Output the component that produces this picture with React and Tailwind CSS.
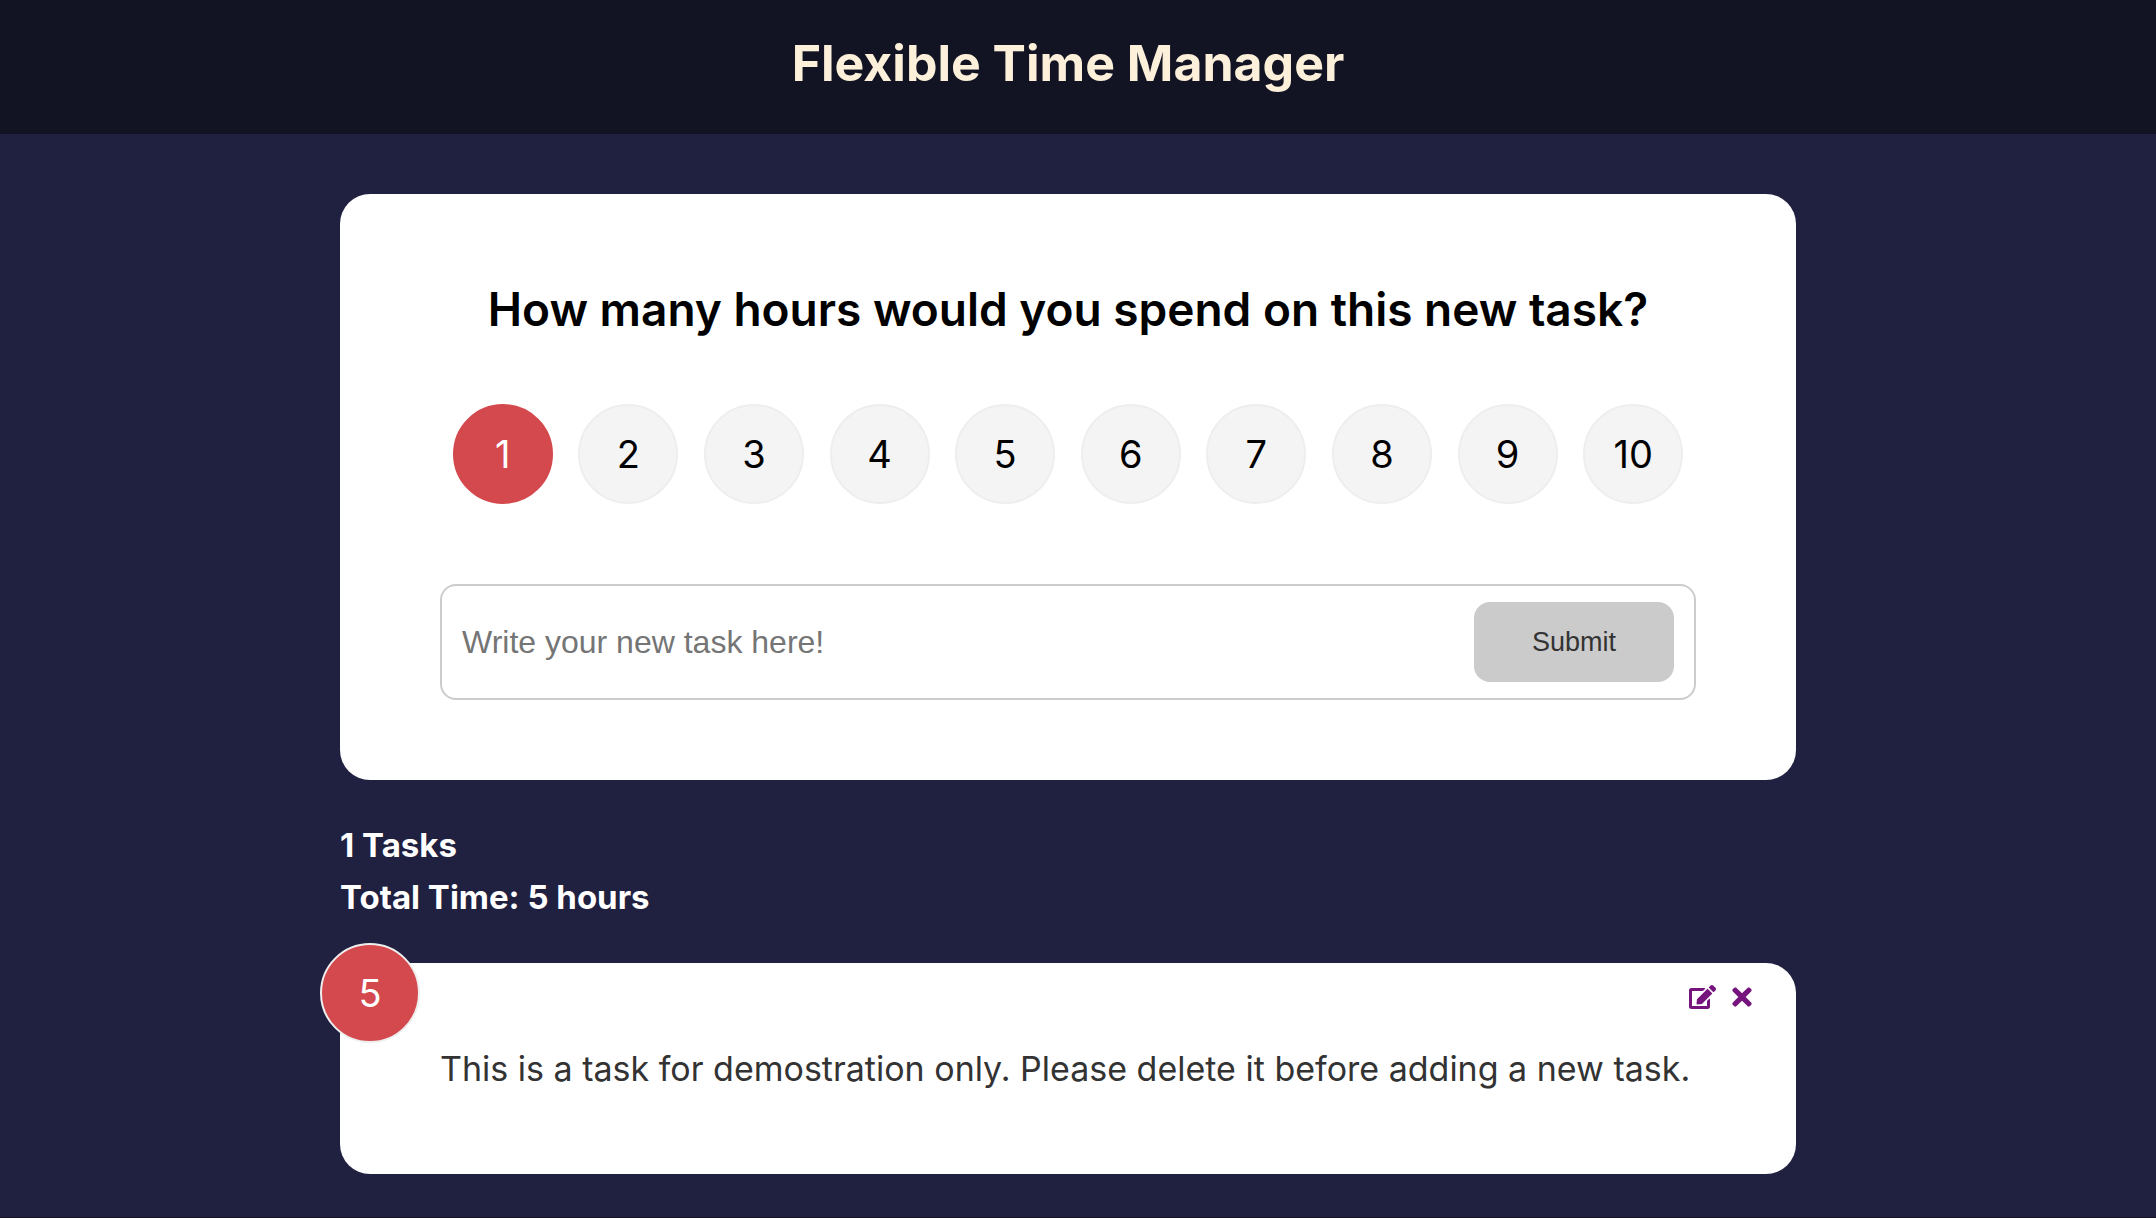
import { useState } from "react";
import { FaEdit, FaTimes } from "react-icons/fa";

const HOURS = [1, 2, 3, 4, 5, 6, 7, 8, 9, 10];

function HourPicker({ value, onChange }) {
  return (
    <ul className="mt-[60px] flex justify-around">
      {HOURS.map((hour) => (
        <li key={hour}>
          <label className="flex size-[100px] cursor-pointer items-center justify-center rounded-full border-2 border-[#eeeeee] bg-[#f4f4f4] text-[38px] leading-none text-black has-checked:border-[#d4494d] has-checked:bg-[#d4494d] has-checked:text-white">
            <input
              type="radio"
              name="hours"
              value={hour}
              checked={value === hour}
              onChange={() => onChange(hour)}
              className="sr-only"
            />
            {hour}
          </label>
        </li>
      ))}
    </ul>
  );
}

function TaskForm() {
  const [hours, setHours] = useState(1);
  const [text, setText] = useState("");
  return (
    <form
      onSubmit={(event) => event.preventDefault()}
      className="rounded-[30px] bg-white px-[100px] py-20"
    >
      <h2 className="text-center text-[46px] leading-[70px] font-semibold text-black">
        How many hours would you spend on this new task?
      </h2>
      <HourPicker value={hours} onChange={setHours} />
      <div className="mt-20 flex items-center rounded-2xl border-2 border-[#cccccc] px-5 py-4 font-['Liberation_Sans',Arial,sans-serif]">
        <input
          type="text"
          aria-label="New task"
          placeholder="Write your new task here!"
          value={text}
          onChange={(event) => setText(event.target.value)}
          className="min-w-0 flex-1 text-[32px] text-[#333333] outline-none placeholder:text-[#757575]"
        />
        <button
          type="submit"
          className="h-20 w-[200px] rounded-2xl bg-[#cbcbcb] text-[27px] text-[#333333]"
        >
          Submit
        </button>
      </div>
    </form>
  );
}

function TaskCard({ hours, text }) {
  return (
    <article className="relative mt-10 rounded-[30px] bg-white px-[100px] pt-20 pb-[79px]">
      <div className="absolute -top-5 -left-5 flex size-[100px] items-center justify-center rounded-full border-2 border-[#eeeeee] bg-[#d4494d] text-[38px] leading-none text-white">
        {hours}
      </div>
      <div className="absolute top-5 right-11 flex items-center gap-4 text-[#75147c]">
        <button type="button" aria-label="Edit task">
          <FaEdit className="h-6 w-[27px]" />
        </button>
        <button type="button" aria-label="Delete task">
          <FaTimes className="h-7 w-5" />
        </button>
      </div>
      <p className="text-[34px] leading-[52px] text-[#333333]">{text}</p>
    </article>
  );
}

export default function App() {
  return (
    <div className="flex min-h-screen flex-col border-b border-[#14121f] bg-[#202140] font-[Inter,sans-serif]">
      <header className="bg-[#121424] pt-6 pr-5 pb-8">
        <h1 className="text-center text-[50px] leading-[78px] font-bold text-[#fdf0da]">
          Flexible Time Manager
        </h1>
      </header>
      <main className="pt-[60px] pr-5">
        <div className="mx-auto max-w-[1456px]">
          <TaskForm />
          <section className="mt-[39px]">
            <div className="text-[33px] leading-[52px] font-bold text-white">
              <h3>1 Tasks</h3>
              <h3>Total Time: 5 hours</h3>
            </div>
            <TaskCard
              hours={5}
              text="This is a task for demostration only. Please delete it before adding a new task."
            />
          </section>
        </div>
      </main>
    </div>
  );
}
